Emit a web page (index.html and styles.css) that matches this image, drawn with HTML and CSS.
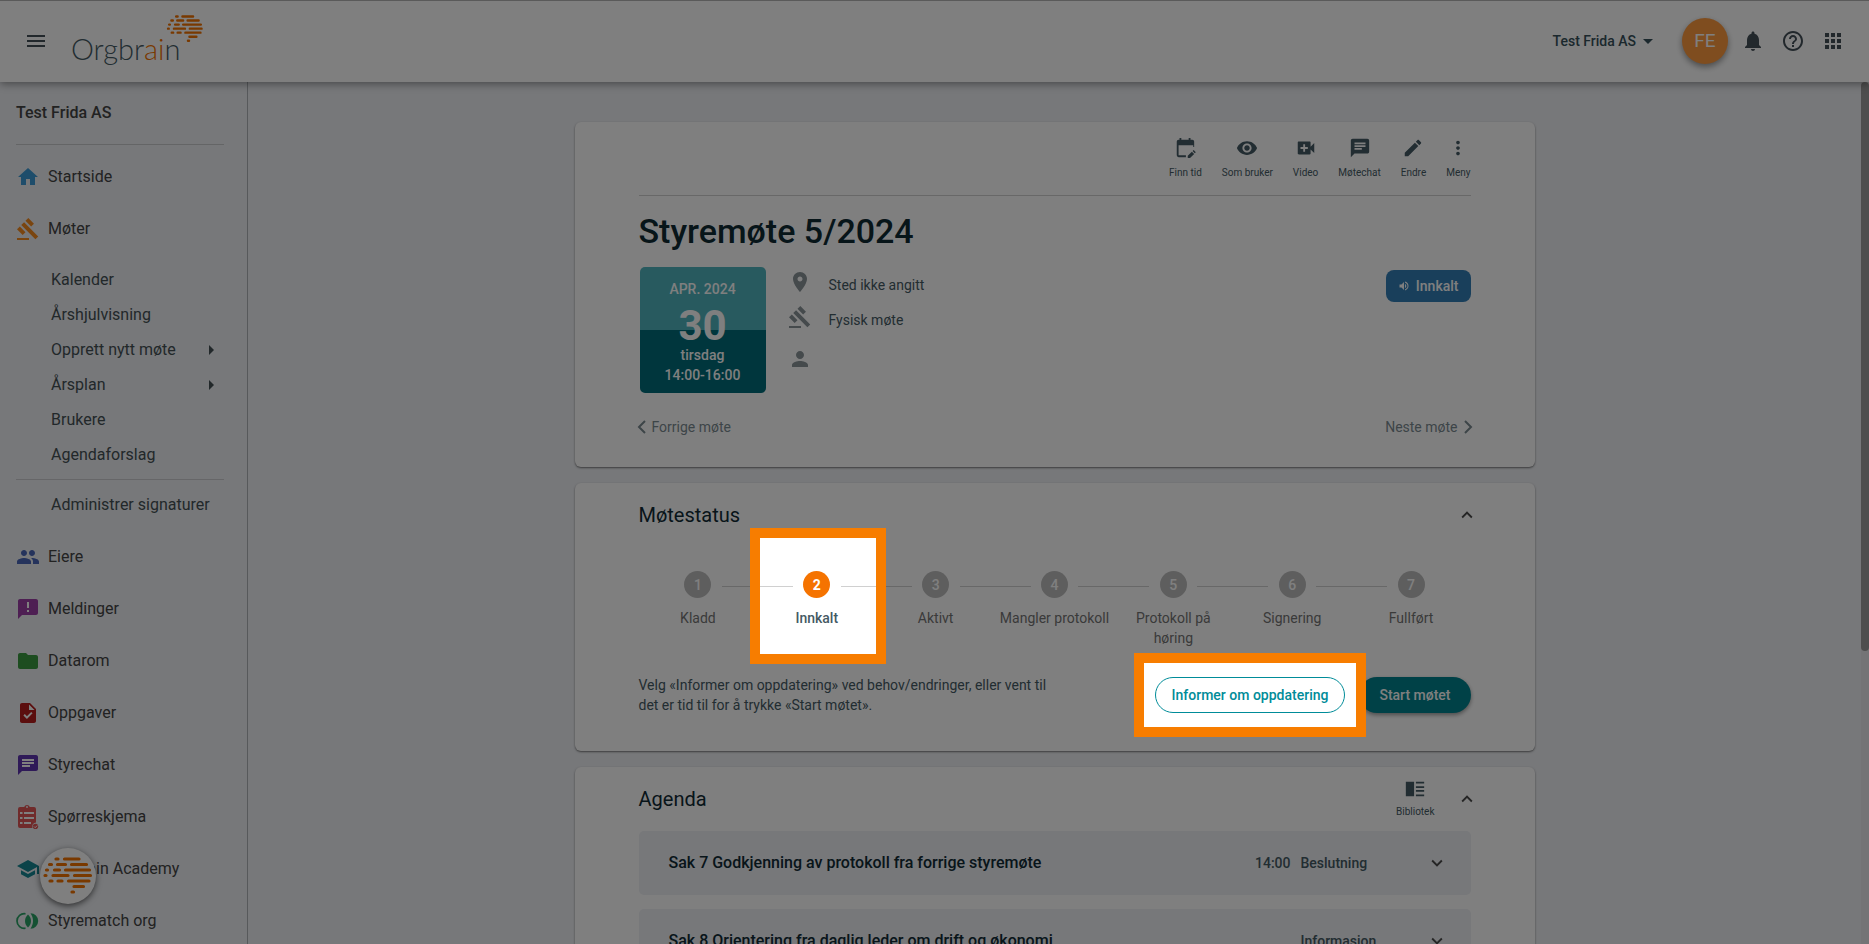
FILE: index.html
```html
<!DOCTYPE html>
<html lang="nb">
<head>
<meta charset="utf-8">
<meta name="viewport" content="width=device-width, initial-scale=1">
<title>Styremøte 5/2024 – Orgbrain</title>
<link rel="stylesheet" href="styles.css">
</head>
<body>
<svg class="sprite" aria-hidden="true">
  <symbol id="gavel" viewBox="0 0 24 24"><path d="M1 21h12v2H1zM5.245 8.07l2.83-2.827 14.14 14.142-2.828 2.828zM12.317 1l5.657 5.656-2.83 2.83-5.654-5.66zM3.825 9.485l5.657 5.657-2.828 2.828-5.657-5.657z"/></symbol>
  <symbol id="chat" viewBox="0 0 24 24"><path fill="#fff" d="M5 5h14v10H5z"/><path d="M20 2H4c-1.1 0-1.99.9-1.99 2L2 22l4-4h14c1.1 0 2-.9 2-2V4c0-1.1-.9-2-2-2zM6 9h12v2H6V9zm8 5H6v-2h8v2zm4-6H6V6h12v2z"/></symbol>
  <symbol id="brain" viewBox="0 0 50 38"><g stroke="currentColor" stroke-width="3.2" stroke-linecap="round"><path d="M13 2h2M21.500 2H36M6.500 7.500h2M14.500 7.500h8M28.500 7.500H43.500M3.500 13h1M11.500 13h5M22.500 13H46.500M2 18.500h1M10 18.500h15M31.500 18.500H47.500M7 24h2M15 24h4M25.500 24H46M31 29.500H40.500M29 35h1.500"/></g></symbol>
  <symbol id="up" viewBox="0 0 24 24"><path d="M12 8l-6 6 1.410 1.410L12 10.830l4.590 4.580L18 14z"/></symbol>
  <symbol id="down" viewBox="0 0 24 24"><path d="M16.590 8.590L12 13.170 7.410 8.590 6 10l6 6 6-6z"/></symbol>
</svg>

<header class="topbar">
  <button class="icon-btn" aria-label="Meny"><svg class="icon" viewBox="0 0 24 24"><path d="M3 18h18v-2H3v2zm0-5h18v-2H3v2zm0-7v2h18V6H3z"/></svg></button>
  <a class="logo" href="#" aria-label="Orgbrain"><span class="logo-text">Orgbr<b>ai</b>n</span><svg class="logo-brain"><use href="#brain"/></svg></a>
  <button class="org">Test Frida AS<svg class="caret" viewBox="0 0 10 5"><path d="M0 0h10L5 5z"/></svg></button>
  <button class="avatar" aria-label="Profil">FE</button>
  <div class="top-icons">
    <button class="icon-btn" aria-label="Varsler"><svg class="icon" viewBox="0 0 24 24"><path d="M12 22c1.100 0 2-.9 2-2h-4c0 1.100.89 2 2 2zm6-6v-5c0-3.070-1.640-5.640-4.500-6.320V4c0-.83-.67-1.500-1.500-1.500s-1.500.67-1.500 1.500v.68C7.630 5.360 6 7.920 6 11v5l-2 2v1h16v-1l-2-2z"/></svg></button>
    <button class="icon-btn" aria-label="Hjelp"><svg class="icon" viewBox="0 0 24 24"><path d="M11 18h2v-2h-2v2zm1-16C6.480 2 2 6.480 2 12s4.480 10 10 10 10-4.480 10-10S17.520 2 12 2zm0 18c-4.410 0-8-3.590-8-8s3.590-8 8-8 8 3.590 8 8-3.590 8-8 8zm0-14c-2.210 0-4 1.790-4 4h2c0-1.100.9-2 2-2s2 .9 2 2c0 2-3 1.750-3 5h2c0-2.250 3-2.500 3-5 0-2.210-1.790-4-4-4z"/></svg></button>
    <button class="icon-btn" aria-label="Apper"><svg class="icon" viewBox="0 0 24 24"><path d="M4 8h4V4H4zm6 12h4v-4h-4zm-6 0h4v-4H4zm0-6h4v-4H4zm6 0h4v-4h-4zm6-10v4h4V4zm-6 4h4V4h-4zm6 6h4v-4h-4zm0 6h4v-4h-4z"/></svg></button>
  </div>
</header>

<div class="shell">
  <nav class="sidebar" aria-label="Hovedmeny">
    <h2 class="side-title">Test Frida AS</h2>
    <a class="item" href="#"><svg class="icon c-home" viewBox="0 0 24 24"><path d="M10 20v-6h4v6h5v-8h3L12 3 2 12h3v8z"/></svg>Startside</a>
    <a class="item" href="#"><svg class="icon c-meet"><use href="#gavel"/></svg>Møter</a>
    <div class="sub">
      <a href="#">Kalender</a>
      <a href="#">Årshjulvisning</a>
      <a href="#">Opprett nytt møte<svg class="arrow" viewBox="0 0 5 10"><path d="M0 0l5 5-5 5z"/></svg></a>
      <a href="#">Årsplan<svg class="arrow" viewBox="0 0 5 10"><path d="M0 0l5 5-5 5z"/></svg></a>
      <a href="#">Brukere</a>
      <a href="#">Agendaforslag</a>
      <hr>
      <a href="#">Administrer signaturer</a>
    </div>
    <a class="item" href="#"><svg class="icon c-own" viewBox="0 0 24 24"><path d="M16 11c1.660 0 2.990-1.340 2.990-3S17.660 5 16 5s-3 1.340-3 3 1.340 3 3 3zm-8 0c1.660 0 2.990-1.340 2.990-3S9.660 5 8 5 5 6.340 5 8s1.340 3 3 3zm0 2c-2.330 0-7 1.170-7 3.500V19h14v-2.500c0-2.330-4.670-3.500-7-3.500zm8 0c-.29 0-.62.02-.97.05 1.160.84 1.970 1.970 1.970 3.450V19h6v-2.500c0-2.330-4.670-3.500-7-3.500z"/></svg>Eiere</a>
    <a class="item" href="#"><svg class="icon c-msg" viewBox="0 0 24 24"><path fill="#fff" d="M10 4h4v12h-4z"/><path d="M20 2H4c-1.100 0-1.990.9-1.990 2L2 22l4-4h14c1.100 0 2-.9 2-2V4c0-1.100-.9-2-2-2zm-7 9h-2V5h2v6zm0 4h-2v-2h2v2z"/></svg>Meldinger</a>
    <a class="item" href="#"><svg class="icon c-data" viewBox="0 0 24 24"><path d="M10 4H4c-1.100 0-1.990.9-1.990 2L2 18c0 1.100.9 2 2 2h16c1.100 0 2-.9 2-2V8c0-1.100-.9-2-2-2h-8l-2-2z"/></svg>Datarom</a>
    <a class="item" href="#"><svg class="icon c-task" viewBox="0 0 24 24"><path fill="#fff" d="M7 10h10v8H7zM13 3.500L18.500 9H13z"/><path d="M14 2H6c-1.100 0-2 .9-2 2v16c0 1.100.89 2 1.990 2H18c1.100 0 2-.9 2-2V8l-6-6zm-3.060 16L7.400 14.460l1.410-1.410 2.120 2.120 4.240-4.240 1.410 1.410L10.940 18zM13 9V3.500L18.500 9H13z"/></svg>Oppgaver</a>
    <a class="item" href="#"><svg class="icon c-chat"><use href="#chat"/></svg>Styrechat</a>
    <a class="item" href="#"><svg class="icon c-form" viewBox="0 0 24 24"><path fill-rule="evenodd" d="M4 2h4.200a3 3 0 0 1 5.600 0H18a2 2 0 0 1 2 2v13.500a4 4 0 0 0-3.500 5.500H4a2 2 0 0 1-2-2V4a2 2 0 0 1 2-2zm7-1a1 1 0 1 0 0 2 1 1 0 0 0 0-2z"/><path fill="#fff" d="M4 7h2.500v2H4zm4 0h10v2H8zM4 12h2.500v2H4zm4 0h10v2H8zM4 17h2.500v2H4zm4 0h7v2H8z"/><circle cx="19.500" cy="21.500" r="2.700"/><path d="M18 21.500l1.200 1.200 2-2.200" fill="none" stroke="#fff"/></svg>Spørreskjema</a>
    <a class="item" href="#"><svg class="icon c-school" viewBox="0 0 24 24"><path d="M5 13.180v4L12 21l7-3.820v-4L12 17l-7-3.820zM12 3L1 9l11 6 9-4.910V17h2V9L12 3z"/></svg>Orgbrain Academy</a>
    <a class="item" href="#"><svg class="icon c-match" viewBox="0 0 24 24"><path fill="none" stroke="currentColor" stroke-width="1.700" d="M9.500 4.800a7.300 7.300 0 1 0 0 14.400"/><path d="M12 5.500c4 3.500 4 9.500 0 13-4-3.500-4-9.500 0-13z"/><path d="M14.500 4.300a7.700 7.700 0 1 1 0 15.400c3.400-5 3.400-10.400 0-15.400z"/></svg>Styrematch org</a>
  </nav>

  <main class="content">
    <section class="card meeting">
      <div class="toolbar">
        <button class="tool"><svg class="tool-icon" viewBox="0 0 24 24"><path d="M19 3h-1V1h-2v2H8V1H6v2H5a2 2 0 0 0-2 2v15a2 2 0 0 0 2 2h8v-2H5V9h16v2h1V5a2 2 0 0 0-2-2zM15 20.500V23h2.500l4.500-4.500-2.500-2.500zM23.800 16.500l-2.300-2.300-1.200 1.200 2.300 2.300z"/></svg>Finn tid</button>
        <button class="tool"><svg class="tool-icon" viewBox="0 0 24 24"><path d="M12 4.500C7 4.500 2.730 7.610 1 12c1.730 4.390 6 7.500 11 7.500s9.270-3.110 11-7.500c-1.730-4.390-6-7.500-11-7.500zM12 17c-2.760 0-5-2.240-5-5s2.240-5 5-5 5 2.240 5 5-2.240 5-5 5zm0-8c-1.660 0-3 1.340-3 3s1.340 3 3 3 3-1.340 3-3-1.340-3-3-3z"/></svg>Som bruker</button>
        <button class="tool"><svg class="tool-icon" viewBox="0 0 24 24"><path fill="#fff" d="M6 8h9v8H6z"/><path d="M17 10.500V6c0-.55-.45-1-1-1H4c-.55 0-1 .45-1 1v12c0 .55.45 1 1 1h12c.55 0 1-.45 1-1v-4.500l4 4v-11l-4 4zM14 13h-3v3H9v-3H6v-2h3V8h2v3h3v2z"/></svg>Video</button>
        <button class="tool"><svg class="tool-icon"><use href="#chat"/></svg>Møtechat</button>
        <button class="tool"><svg class="tool-icon" viewBox="0 0 24 24"><path d="M3 17.250V21h3.750L17.810 9.940l-3.750-3.750L3 17.250zM20.710 7.040c.39-.39.39-1.020 0-1.410l-2.340-2.340c-.39-.39-1.020-.39-1.410 0l-1.830 1.830 3.750 3.750 1.830-1.830z"/></svg>Endre</button>
        <button class="tool"><svg class="tool-icon" viewBox="0 0 24 24"><path d="M12 8c1.100 0 2-.9 2-2s-.9-2-2-2-2 .9-2 2 .9 2 2 2zm0 2c-1.100 0-2 .9-2 2s.9 2 2 2 2-.9 2-2-.9-2-2-2zm0 6c-1.100 0-2 .9-2 2s.9 2 2 2 2-.9 2-2-.9-2-2-2z"/></svg>Meny</button>
      </div>
      <h1>Styremøte 5/2024</h1>
      <div class="details">
        <div class="date">
          <span class="month">APR. 2024</span>
          <span class="day">30</span>
          <span>tirsdag</span>
          <span>14:00-16:00</span>
        </div>
        <ul class="facts">
          <li><svg class="icon" viewBox="0 0 24 24"><path d="M12 2C8.130 2 5 5.130 5 9c0 5.250 7 13 7 13s7-7.750 7-13c0-3.870-3.130-7-7-7zm0 9.500c-1.380 0-2.500-1.120-2.500-2.500s1.120-2.500 2.500-2.500 2.500 1.120 2.500 2.500-1.120 2.500-2.500 2.500z"/></svg>Sted ikke angitt</li>
          <li><svg class="icon"><use href="#gavel"/></svg>Fysisk møte</li>
          <li class="people"><svg class="icon" viewBox="0 0 24 24"><path d="M12 12c2.210 0 4-1.790 4-4s-1.790-4-4-4-4 1.790-4 4 1.790 4 4 4zm0 2c-2.670 0-8 1.340-8 4v2h16v-2c0-2.660-5.330-4-8-4z"/></svg></li>
        </ul>
        <span class="badge"><svg class="badge-icon" viewBox="0 0 24 24"><path d="M3 9v6h4l5 5V4L7 9H3zm13.500 3c0-1.770-1.020-3.290-2.500-4.030v8.050c1.480-.73 2.500-2.250 2.500-4.020zM14 3.230v2.060c2.890.86 5 3.540 5 6.710s-2.110 5.850-5 6.710v2.060c4.010-.91 7-4.490 7-8.770s-2.990-7.860-7-8.770z"/></svg>Innkalt</span>
      </div>
      <div class="pager">
        <a href="#"><svg class="chev" viewBox="0 0 9 14"><path d="M8 1L2 7l6 6"/></svg>Forrige møte</a>
        <a href="#">Neste møte<svg class="chev" viewBox="0 0 9 14"><path d="M1 1l6 6-6 6"/></svg></a>
      </div>
    </section>

    <section class="card status">
      <div class="card-head"><h2>Møtestatus</h2><button class="icon-btn toggle" aria-label="Skjul møtestatus"><svg class="icon small"><use href="#up"/></svg></button></div>
      <ol class="steps">
        <li><span class="num">1</span>Kladd</li>
        <li class="active"><span class="spot-bg"></span><span class="num">2</span>Innkalt<span class="spot-ring"></span></li>
        <li><span class="num">3</span>Aktivt</li>
        <li><span class="num">4</span>Mangler protokoll</li>
        <li><span class="num">5</span>Protokoll på høring</li>
        <li><span class="num">6</span>Signering</li>
        <li><span class="num">7</span>Fullført</li>
      </ol>
      <div class="actions">
        <p>Velg «Informer om oppdatering» ved behov/endringer, eller vent til det er tid til for å trykke «Start møtet».</p>
        <div class="buttons">
          <span class="spot"><span class="spot-bg"></span><button class="btn outline">Informer om oppdatering</button></span>
          <button class="btn solid">Start møtet</button>
        </div>
      </div>
    </section>

    <section class="card agenda">
      <div class="card-head"><h2>Agenda</h2>
        <button class="tool"><svg class="tool-icon" viewBox="0 0 24 24"><path d="M2 4h9v16H2zM13 4h9v2h-9zm0 5h9v2h-9zm0 4h9v2h-9zm0 5h9v2h-9z"/></svg>Bibliotek</button>
        <button class="icon-btn toggle" aria-label="Skjul agenda"><svg class="icon small"><use href="#up"/></svg></button></div>
      <article class="case"><h3>Sak 7 Godkjenning av protokoll fra forrige styremøte</h3><span class="time">14:00</span><span class="kind">Beslutning</span><button class="icon-btn" aria-label="Vis sak 7"><svg class="icon small"><use href="#down"/></svg></button></article>
      <article class="case"><h3>Sak 8 Orientering fra daglig leder om drift og økonomi</h3><span class="time"></span><span class="kind">Informasjon</span><button class="icon-btn" aria-label="Vis sak 8"><svg class="icon small"><use href="#down"/></svg></button></article>
    </section>
  </main>
  <div class="scrollbar" aria-hidden="true"><div class="thumb"></div></div>
</div>

<button class="bubble" aria-label="Åpne hjelp"><svg class="bubble-brain"><use href="#brain"/></svg></button>
<div class="dim"></div>
</body>
</html>
```

FILE: styles.css
```css
* { box-sizing: border-box; }

body {
  margin: 0;
  height: 100vh;
  display: flex;
  flex-direction: column;
  overflow: hidden;
  background: #eef0f4;
  color: #455a64;
  font: 14px/20px Roboto, "Liberation Sans", sans-serif;
}

h1, h2, h3, p, ul, ol { margin: 0; padding: 0; font-weight: 400; }
ul, ol { list-style: none; }
a { color: inherit; text-decoration: none; }
svg { fill: currentColor; flex: none; }
button { margin: 0; padding: 0; border: 0; background: none; color: inherit; font: inherit; cursor: pointer; }

.sprite { position: absolute; width: 0; height: 0; }
.icon { width: 24px; height: 24px; display: block; }
.icon.small { width: 22px; height: 22px; }
.icon-btn { display: flex; }

.topbar {
  position: relative;
  z-index: 5;
  flex: none;
  height: 82px;
  display: flex;
  align-items: center;
  padding: 0 24px 1px;
  background: #fff;
  border-top: 1px solid #b4b4b4;
  box-shadow: 0 2px 8px rgba(0, 0, 0, .4);
  color: #455059;
}
.logo { position: relative; margin: 16px auto 0 23px; width: 134px; }
.logo-text { font: 300 29px/40px Lato, "Open Sans", sans-serif; color: #455a64; }
.logo-text b { font-weight: 300; color: #f27200; }
.logo-brain { position: absolute; right: 1px; top: -14px; width: 38px; height: 28px; color: #f27200; }
.org { display: flex; align-items: center; gap: 7px; font-weight: 500; color: #37505a; }
.caret { width: 10px; height: 5px; }
.avatar {
  width: 46px;
  height: 46px;
  margin: 0 13px 0 29px;
  border-radius: 50%;
  background: #ff9a3e;
  color: #fff;
  font-size: 19px;
  box-shadow: 0 3px 6px rgba(0, 0, 0, .4);
}
.top-icons { display: flex; gap: 16px; }

.shell { flex: 1; min-height: 0; display: flex; }

.sidebar {
  flex: none;
  width: 248px;
  padding: 0 23px 0 16px;
  border-right: 1px solid #aeb2b7;
  font-size: 16px;
  color: #444;
  overflow: hidden;
}
.side-title {
  padding: 21px 0;
  margin-bottom: 6px;
  border-bottom: 1px solid #c9cacd;
  font-size: 16px;
  font-weight: 500;
}
.item { display: flex; align-items: center; gap: 8px; height: 52px; }
.sub { padding: 7px 0 9px; color: #455055; }
.sub a { display: flex; align-items: center; justify-content: space-between; height: 35px; padding: 0 10px 0 35px; }
.sub hr { margin: 7px 0; border: 0; border-top: 1px solid #cccdd0; }
.arrow { width: 5px; height: 10px; }
.c-home { color: #3c9bd6; }
.c-meet { color: #f58a1f; }
.c-own { color: #4a66b8; }
.c-msg { color: #9c3fa6; }
.c-data { color: #3b9a41; }
.c-task { color: #b71c1c; }
.c-chat { color: #5e35b1; }
.c-form { color: #e05656; }
.c-school { color: #168693; }
.c-match { color: #2aa366; }

.content {
  flex: 1;
  min-width: 0;
  display: flex;
  flex-direction: column;
  align-items: center;
  gap: 16px;
  padding: 40px 24px 0;
  overflow: hidden;
}
.scrollbar { flex: none; width: 8px; background: #e8e8ec; }
.thumb { height: 66%; background: #9c9c9c; border-radius: 4px; }

.card {
  flex: none;
  width: 100%;
  max-width: 960px;
  padding: 0 64px;
  background: #fff;
  border-radius: 6px;
  box-shadow: 0 1px 2px rgba(0, 0, 0, .5);
}
.card h2 { font-size: 20px; line-height: 24px; color: #102a34; }

.toolbar {
  display: flex;
  justify-content: flex-end;
  gap: 20px;
  padding: 15px 0 15px;
  border-bottom: 1px solid #d0d0d0;
}
.tool {
  display: flex;
  flex-direction: column;
  align-items: center;
  gap: 7px;
  font-size: 10px;
  line-height: 14px;
}
.tool-icon { width: 22px; height: 22px; }
.meeting h1 { padding: 15px 0 16px; font-size: 34px; font-weight: 500; line-height: 40px; color: #0f2a33; }
.details { display: flex; padding-left: 1px; }
.date {
  width: 126px;
  height: 126px;
  padding-top: 12px;
  display: flex;
  flex-direction: column;
  align-items: center;
  border-radius: 5px;
  background: linear-gradient(#50b4be 50%, #006c7a 50%);
  color: #fff;
  font-weight: 500;
}
.day { margin-bottom: -8px; font-size: 42px; line-height: 54px; font-weight: 700; }
.facts { flex: 1; padding: 2px 0 0 22px; display: flex; flex-direction: column; gap: 3px; }
.facts li { display: flex; align-items: center; gap: 17px; height: 32px; }
.facts .icon { margin-bottom: 6px; color: #8a9499; }
.people { padding-top: 14px; }
.badge {
  align-self: flex-start;
  display: flex;
  align-items: center;
  gap: 6px;
  height: 32px;
  margin-top: 3px;
  padding: 0 12px;
  border-radius: 8px;
  background: #327eb6;
  color: #fff;
  font-weight: 500;
}
.badge-icon { width: 12px; height: 12px; }
.pager { display: flex; justify-content: space-between; padding: 24px 0 30px; color: #7b8a91; }
.pager a { display: flex; align-items: center; gap: 8px; }
.chev { width: 9px; height: 14px; margin: 0 -2px; fill: none; stroke: currentColor; stroke-width: 2; }

.card-head { display: flex; align-items: center; height: 64px; }
.card-head h2 { flex: 1; }
.toggle { margin: 0 -7px 0 0; color: #4b4b4b; }

.steps { display: grid; grid-template-columns: repeat(7, 1fr); padding: 24px 0; }
.steps li {
  position: relative;
  display: flex;
  flex-direction: column;
  align-items: center;
  gap: 10px;
  padding: 0 3px;
  text-align: center;
  color: #757575;
}
.steps li::before, .steps li::after {
  content: "";
  position: absolute;
  top: 15px;
  height: 1px;
  background: #d0d0d0;
}
.steps li::before { left: 0; right: calc(50% + 24px); }
.steps li::after { right: 0; left: calc(50% + 24px); }
.steps li:first-child::before, .steps li:last-child::after { display: none; }
.num {
  width: 27px;
  height: 27px;
  border-radius: 50%;
  background: #bdbdbd;
  color: #fff;
  line-height: 28px;
  font-weight: 500;
}
.steps .active { z-index: 30; color: #455a64; font-weight: 500; }
.active .num { background: #f57300; font-weight: 700; }
.spot-bg, .spot-ring { position: absolute; border: 10px solid #f77d00; }
.spot-bg { z-index: -1; background: #fff; }
.active .spot-bg, .active .spot-ring { top: -43px; left: -7px; width: 136px; height: 136px; }

.actions { display: flex; align-items: center; justify-content: space-between; padding: 3px 0 36px; }
.actions p { max-width: 420px; }
.buttons { display: flex; gap: 14px; }
.spot { position: relative; z-index: 30; }
.spot .spot-bg { top: -24px; right: -21px; bottom: -24px; left: -21px; }
.btn { height: 36px; padding: 0 20px; border-radius: 18px; font-weight: 500; }
.outline { padding: 0 16px; border: 1px solid #008c99; color: #008c99; background: #fff; }
.solid { background: #00838f; color: #fff; box-shadow: 0 2px 4px rgba(0, 0, 0, .4); }

.agenda .tool { gap: 5px; padding-bottom: 2px; }
.agenda .toggle { margin-left: 21px; }
.case {
  display: flex;
  align-items: center;
  height: 64px;
  margin-bottom: 14px;
  padding: 0 23px 0 30px;
  border-radius: 5px;
  background: #eef0f4;
}
.case h3 { flex: 1; font-size: 16px; font-weight: 500; color: #102a34; }
.time, .kind { font-weight: 500; }
.time { margin-right: 10px; }
.kind { width: 125px; }
.case .icon-btn { color: #4b4b4b; }

.bubble {
  position: fixed;
  left: 40px;
  bottom: 40px;
  z-index: 6;
  width: 56px;
  height: 56px;
  display: flex;
  align-items: center;
  justify-content: center;
  border-radius: 50%;
  background: #fff;
  color: #f27200;
  box-shadow: 0 2px 6px rgba(0, 0, 0, .6);
}
.bubble-brain { width: 50px; height: 38px; }

.dim { position: fixed; inset: 0; z-index: 20; background: rgba(0, 0, 0, .5); }
```
